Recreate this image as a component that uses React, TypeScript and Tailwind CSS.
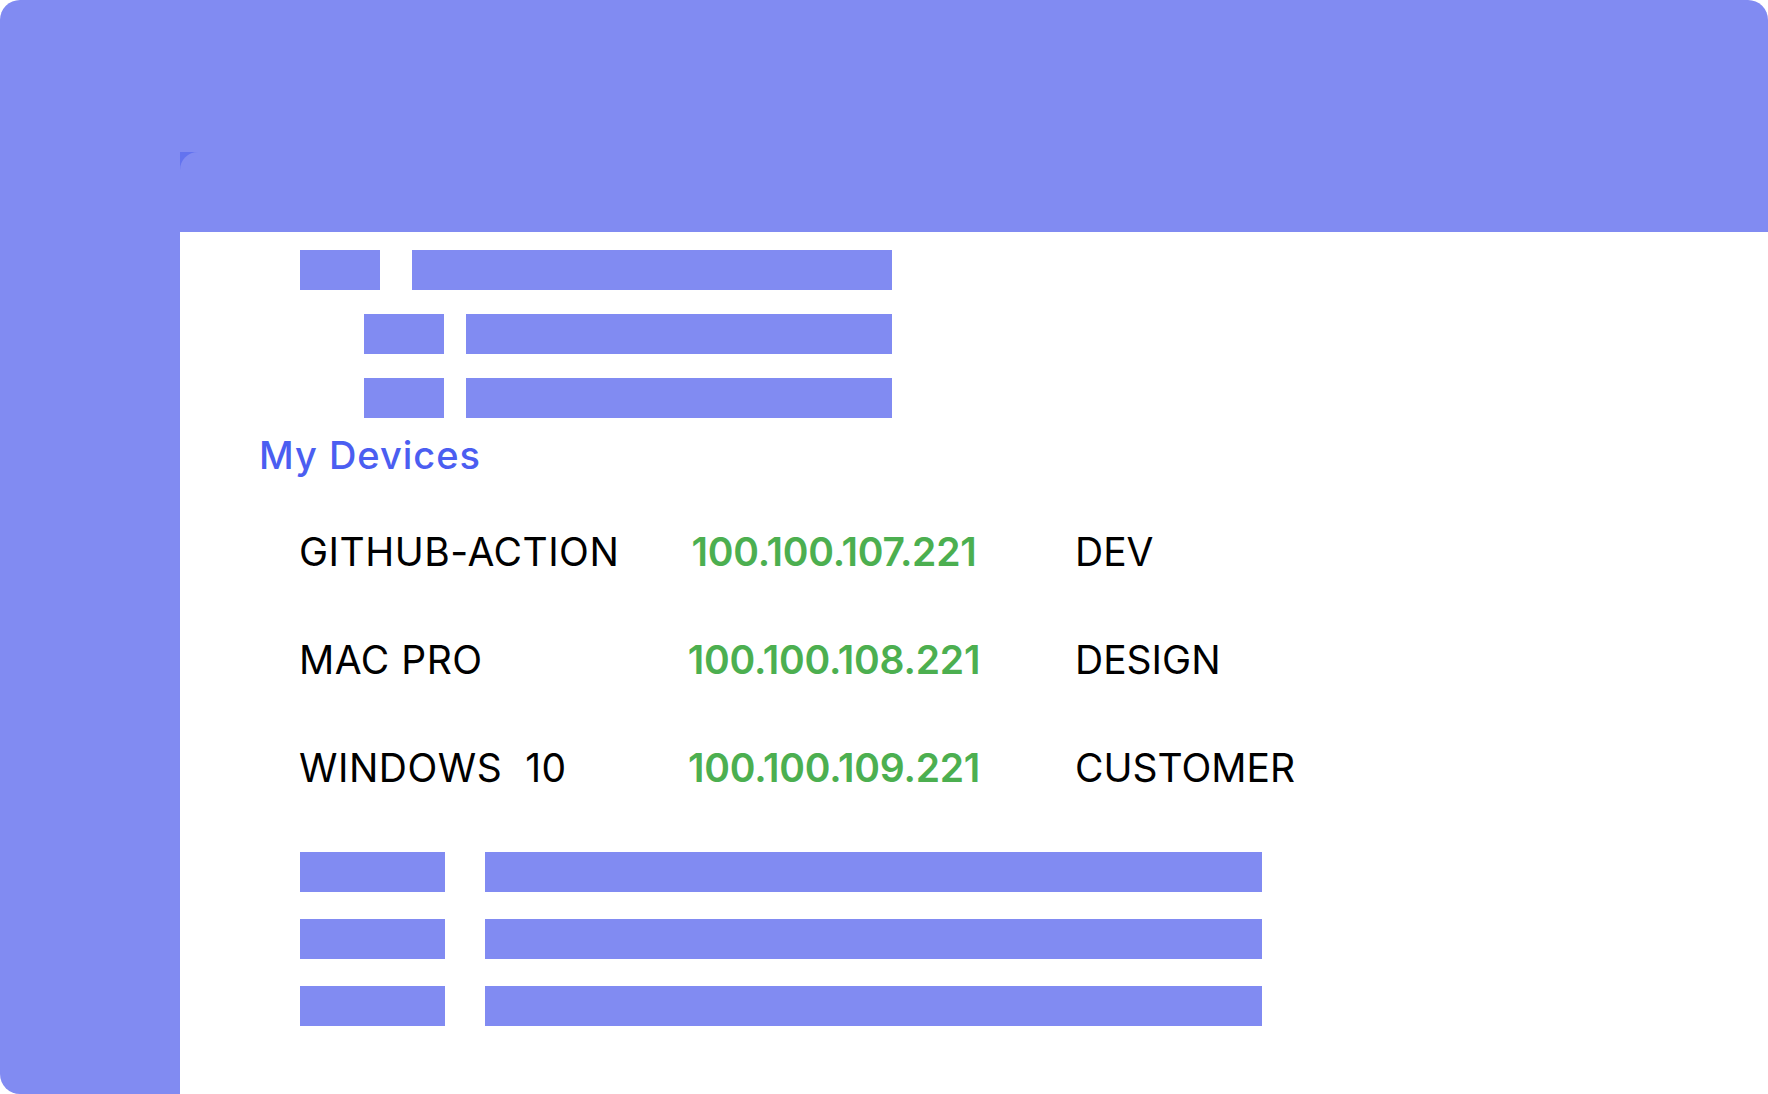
import React from "react";

const devices = [
  { name: "GITHUB-ACTION", ip: "100.100.107.221", tag: "DEV" },
  { name: "MAC PRO", ip: "100.100.108.221", tag: "DESIGN" },
  { name: "WINDOWS  10", ip: "100.100.109.221", tag: "CUSTOMER" },
];

const Bar = ({ className }: { className: string }) => (
  <div className={"h-[40px] bg-[#818bf2] " + className} />
);

const App = () => {
  return (
    <div className="w-full h-[1094px] bg-white" style={{ fontFamily: "Inter, 'Noto Sans', sans-serif" }}>
      <div className="flex h-full w-full overflow-hidden rounded-[20px] rounded-br-none bg-[#818bf2]">
        {/* sidebar */}
        <aside className="w-[180px] shrink-0" />

        <div className="flex flex-1 flex-col">
          {/* top header */}
          <div className="h-[152px]" />
          <div className="bg-[#6373ef]">
            <div className="h-[80px] rounded-tl-[18px] bg-[#818bf2]" />
          </div>

          {/* content */}
          <main className="flex-1 bg-white pt-[18px]">
            <div className="flex flex-col gap-[24px]">
              <div className="flex items-center gap-[32px] pl-[120px]">
                <Bar className="w-[80px]" />
                <Bar className="w-[480px]" />
              </div>
              <div className="flex items-center gap-[22px] pl-[184px]">
                <Bar className="w-[80px]" />
                <Bar className="w-[426px]" />
              </div>
              <div className="flex items-center gap-[22px] pl-[184px]">
                <Bar className="w-[80px]" />
                <Bar className="w-[426px]" />
              </div>
            </div>

            <h2 className="mt-[18px] pl-[79px] text-[38px] leading-[38px] font-medium tracking-[1px] text-[#4b5ef1]">
              My Devices
            </h2>

            <div className="mt-[58px] flex flex-col gap-[69px] pl-[119px]">
              {devices.map((d) => (
                <div key={d.ip} className="flex items-center text-[39px] leading-[39px]">
                  <span className="w-[390px] whitespace-pre tracking-[0.5px] text-black">{d.name}</span>
                  <span className="flex w-[290px] justify-center font-semibold tracking-[-0.2px] text-[#4caf50]">
                    {d.ip}
                  </span>
                  <span className="ml-[96px] text-black">{d.tag}</span>
                </div>
              ))}
            </div>

            <div className="mt-[65px] flex flex-col gap-[27px] pl-[120px]">
              {[0, 1, 2].map((i) => (
                <div key={i} className="flex items-center gap-[40px]">
                  <Bar className="w-[145px]" />
                  <Bar className="w-[777px]" />
                </div>
              ))}
            </div>
          </main>
        </div>
      </div>
    </div>
  );
};

export default App;
